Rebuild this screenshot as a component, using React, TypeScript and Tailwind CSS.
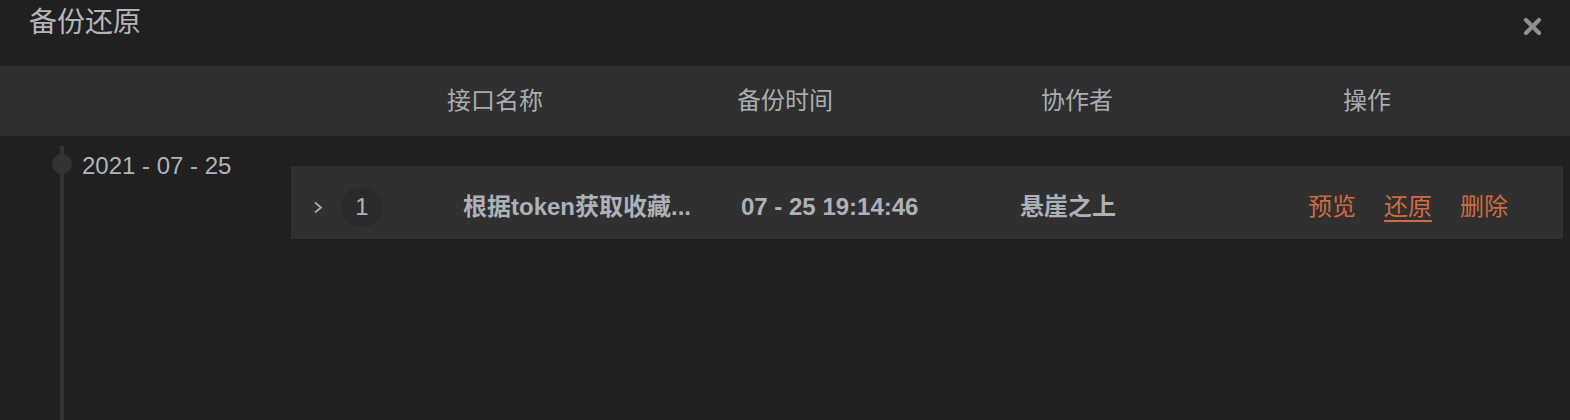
import React from "react";

const FONT = { fontFamily: '"Liberation Sans", "Noto Sans CJK SC", sans-serif' };

export default function App() {
  return (
    <div
      className="w-[1570px] h-[420px] bg-[#202020] overflow-hidden flex flex-col text-[#aaaeb4]"
      style={FONT}
    >
      {/* Title bar */}
      <div className="h-[66px] flex items-start justify-between pl-[29px] pr-[28px]">
        <div className="pt-[9px] text-[28px] leading-[28px] text-[#b3b6bb]">备份还原</div>
        <button className="mt-[17px] w-[19px] h-[19px]" aria-label="关闭">
          <svg width="19" height="19" viewBox="0 0 19 19">
            <path d="M3 3 L16 16 M16 3 L3 16" stroke="#8f8f8f" strokeWidth="4.2" strokeLinecap="round" />
          </svg>
        </button>
      </div>

      {/* Table header */}
      <div className="h-[70px] bg-[#2f2f2f] flex items-center text-[24px] leading-[24px] text-[#a9adb3]">
        <div className="w-[350px]" />
        <div className="w-[290px] text-center">接口名称</div>
        <div className="w-[290px] text-center">备份时间</div>
        <div className="w-[294px] text-center">协作者</div>
        <div className="w-[286px] text-center">操作</div>
      </div>

      {/* Body */}
      <div className="flex-1 flex">
        <div className="relative ml-[60px] mt-[10px] w-[4px] bg-[#333333]">
          <div className="absolute left-[-8px] top-[8px] w-[20px] h-[20px] rounded-full bg-[#333333]" />
        </div>
        <div className="ml-[18px] mt-[18px] w-[209px] text-[24px] leading-[24px] text-[#b0b3b8] whitespace-nowrap">
          2021 - 07 - 25
        </div>
        <div className="mt-[30px] w-[1272px] h-[73px] bg-[#303030] flex items-center pt-[9px] pl-[22px] text-[24px] leading-[24px]">
          <svg width="10" height="13" viewBox="0 0 10 13" className="shrink-0">
            <polyline points="2,1.5 8,6.5 2,11.5" fill="none" stroke="#a9adb3" strokeWidth="1.7" />
          </svg>
          <div className="ml-[18px] w-[42px] h-[40px] rounded-full bg-[#2a2a2a] flex items-center justify-center text-[#b0b4ba] shrink-0">
            1
          </div>
          <div className="ml-[80px] w-[278px] font-bold text-[#adb1b8] whitespace-nowrap">
            根据token获取收藏...
          </div>
          <div className="w-[279px] font-bold text-[#adb1b8] whitespace-nowrap">07 - 25 19:14:46</div>
          <div className="w-[288px] font-bold text-[#adb1b8] whitespace-nowrap">悬崖之上</div>
          <div className="flex gap-[28px] text-[#d06a40] whitespace-nowrap">
            <span>预览</span>
            <span className="underline underline-offset-[5px] decoration-[2px]">还原</span>
            <span>删除</span>
          </div>
        </div>
      </div>
    </div>
  );
}
